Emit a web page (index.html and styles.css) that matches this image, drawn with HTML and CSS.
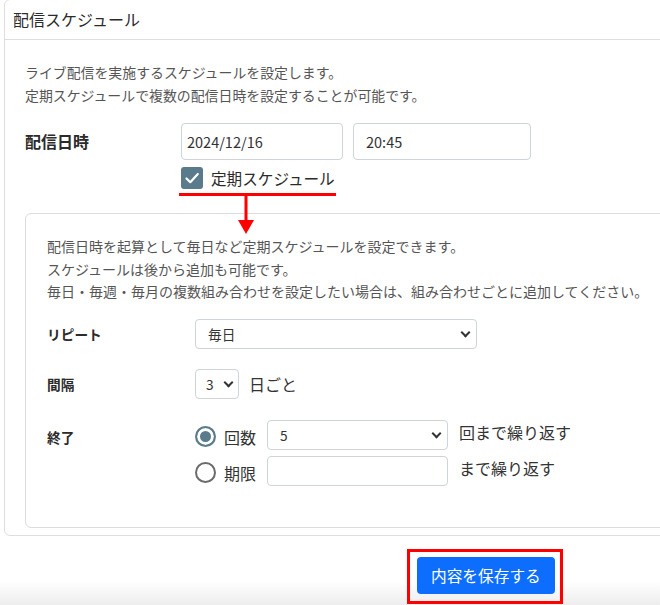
FILE: index.html
```html
<!DOCTYPE html>
<html lang="ja">
<head>
    <meta charset="UTF-8">
    <meta name="viewport" content="width=device-width, initial-scale=1.0">
    <title>配信スケジュール</title>
    <link rel="stylesheet" href="styles.css">
</head>
<body>
    <div class="card">
        <div class="card-header">配信スケジュール</div>
        <div class="card-body">
            <p class="lead">ライブ配信を実施するスケジュールを設定します。<br>定期スケジュールで複数の配信日時を設定することが可能です。</p>

            <div class="field">
                <div class="field-label">配信日時</div>
                <div class="field-main">
                    <div class="datetime">
                        <input type="text" class="form-input date" value="2024/12/16">
                        <input type="text" class="form-input time" value="20:45">
                    </div>
                    <label class="check">
                        <span class="check-box">
                            <svg width="22" height="22" viewBox="0 0 22 22"><path d="M5.5 11.5 L9.3 15.2 L16.8 7" fill="none" stroke="#fff" stroke-width="2.2" stroke-linecap="round" stroke-linejoin="round"/></svg>
                        </span>
                        <span class="check-text">定期スケジュール</span>
                        <svg class="arrow" width="16" height="38" viewBox="0 0 16 38"><rect x="6.5" y="0" width="3" height="26" fill="#f00"/><polygon points="0,24 16,24 8,38" fill="#f00"/></svg>
                    </label>
                </div>
            </div>

            <div class="repeat-box">
                <p class="repeat-note">配信日時を起算として毎日など定期スケジュールを設定できます。<br>スケジュールは後から追加も可能です。<br>毎日・毎週・毎月の複数組み合わせを設定したい場合は、組み合わせごとに追加してください。</p>

                <div class="opt-row first">
                    <div class="opt-label">リピート</div>
                    <span class="select-wrap wide">
                        <select class="form-select"><option>毎日</option><option>毎週</option><option>毎月</option></select>
                    </span>
                </div>

                <div class="opt-row">
                    <div class="opt-label">間隔</div>
                    <span class="select-wrap small">
                        <select class="form-select"><option>3</option></select>
                    </span>
                    <span class="unit">日ごと</span>
                </div>

                <div class="opt-row end">
                    <div class="opt-label top">終了</div>
                    <div class="end-list">
                        <div class="end-opt">
                            <label class="radio"><input type="radio" name="end" checked><span>回数</span></label>
                            <span class="select-wrap mid">
                                <select class="form-select"><option>5</option></select>
                            </span>
                            <span class="after">回まで繰り返す</span>
                        </div>
                        <div class="end-opt">
                            <label class="radio"><input type="radio" name="end"><span>期限</span></label>
                            <input type="text" class="form-input limit">
                            <span class="after">まで繰り返す</span>
                        </div>
                    </div>
                </div>
            </div>
        </div>
    </div>

    <div class="footer">
        <div class="mark">
            <button class="btn-save">内容を保存する</button>
        </div>
    </div>
</body>
</html>
```

FILE: styles.css
```css
* {
    margin: 0;
    padding: 0;
    box-sizing: border-box;
}

body, html {
    width: 100%;
    height: 100%;
}

body {
    font-family: "Noto Sans CJK JP", "Noto Sans", sans-serif;
    background-color: #fff;
    color: #333;
    overflow: hidden;
}

.card {
    width: 690px;
    margin: -1px 0 0 4px;
    border: 1px solid #dedede;
    border-radius: 6px;
    background: #fff;
}

.card-header {
    height: 40px;
    padding: 7px 8px 0;
    font-size: 16px;
    line-height: 24px;
    color: #2b2b2b;
    border-bottom: 1px solid #dedede;
}

.card-body {
    padding: 21px 20px 7px 20px;
}

.lead {
    font-size: 13.9px;
    line-height: 23px;
    color: #555;
}

.field {
    display: flex;
    margin-top: 16px;
}

.field-label {
    width: 156px;
    font-size: 16px;
    font-weight: bold;
    line-height: 37px;
    color: #2b2b2b;
}

.datetime {
    display: flex;
    gap: 10px;
}

.form-input {
    border: 1px solid #ced4da;
    border-radius: 4px;
    font-family: "Noto Sans CJK JP", "Noto Sans", sans-serif;
    font-size: 14.5px;
    color: #333;
    background: #fff;
    outline: none;
}

.form-input.date {
    width: 162px;
    height: 37px;
    padding-left: 5px;
}

.form-input.time {
    width: 178px;
    height: 37px;
    padding-left: 12px;
}

.check {
    position: relative;
    display: inline-flex;
    align-items: center;
    gap: 8px;
    margin: 7px 0 0 -2px;
    padding: 0 1px 4px 2px;
    border-bottom: 3px solid #f00;
}

.check-box {
    display: block;
    width: 22px;
    height: 22px;
    border-radius: 3px;
    background-color: #5a7b8c;
}

.check-box svg {
    display: block;
}

.check-text {
    font-size: 15.6px;
    line-height: 22px;
    color: #2b2b2b;
}

.arrow {
    position: absolute;
    left: 59px;
    top: calc(100% + 3px);
}

.repeat-box {
    margin-top: 17px;
    border: 1px solid #dcdcdc;
    border-radius: 6px;
    padding: 21px 20px 41px 21px;
}

.repeat-note {
    font-size: 14px;
    line-height: 22.5px;
    color: #555;
}

.opt-row {
    display: flex;
    align-items: center;
    margin-top: 20px;
}

.opt-row.first {
    margin-top: 16px;
}

.opt-row.end {
    align-items: flex-start;
    margin-top: 21px;
}

.opt-label {
    width: 148px;
    font-size: 13.7px;
    font-weight: bold;
    color: #2b2b2b;
}

.opt-label.top {
    line-height: 30px;
    padding-top: 2px;
}

.select-wrap {
    position: relative;
    display: inline-block;
}

.select-wrap::after {
    content: "";
    position: absolute;
    top: 10px;
    right: 8px;
    width: 5px;
    height: 5px;
    border-right: 2px solid #333;
    border-bottom: 2px solid #333;
    transform: rotate(45deg);
    pointer-events: none;
}

.form-select {
    appearance: none;
    -webkit-appearance: none;
    display: block;
    height: 30px;
    padding: 0 24px 0 12px;
    border: 1px solid #ced4da;
    border-radius: 4px;
    background: #fff;
    font-family: "Noto Sans CJK JP", "Noto Sans", sans-serif;
    font-size: 13.7px;
    color: #333;
    outline: none;
}

.select-wrap.wide .form-select {
    width: 282px;
}

.select-wrap.small .form-select {
    width: 44px;
    padding: 0 0 0 10px;
}

.select-wrap.small::after {
    right: 7px;
}

.select-wrap.mid .form-select {
    width: 181px;
}

.unit {
    margin-left: 10px;
    font-size: 16px;
    color: #333;
}

.end-list {
    display: flex;
    flex-direction: column;
    gap: 6px;
}

.end-opt {
    display: flex;
    align-items: flex-start;
}

.radio {
    display: flex;
    align-items: center;
    gap: 8px;
    height: 30px;
    padding-top: 4px;
    margin-right: 11px;
    font-size: 16px;
    color: #333;
}

.radio input {
    appearance: none;
    -webkit-appearance: none;
    width: 21px;
    height: 21px;
    border: 2px solid #6b6b6b;
    border-radius: 50%;
    background: #fff;
    margin: 0;
}

.radio input:checked {
    border-color: #5a7b8c;
    background: #5a7b8c;
    box-shadow: inset 0 0 0 3px #fff;
}

.form-input.limit {
    width: 181px;
    height: 30px;
}

.after {
    margin-left: 11px;
    font-size: 16px;
    line-height: 24px;
    color: #333;
}

.footer {
    height: 90px;
    padding: 13px 0 0 407px;
    background: linear-gradient(to bottom, #fff 0, #fff 45px, #ebebeb 72px, #e8e8e8 90px);
}

.mark {
    display: inline-block;
    border: 3px solid #f00;
    padding: 5px 5px 7px 7px;
}

.btn-save {
    display: block;
    height: 37px;
    padding: 0 14px;
    border: none;
    border-radius: 4px;
    background-color: #0d6efd;
    color: #fff;
    font-family: "Noto Sans CJK JP", "Noto Sans", sans-serif;
    font-size: 15.7px;
    cursor: pointer;
}
```
